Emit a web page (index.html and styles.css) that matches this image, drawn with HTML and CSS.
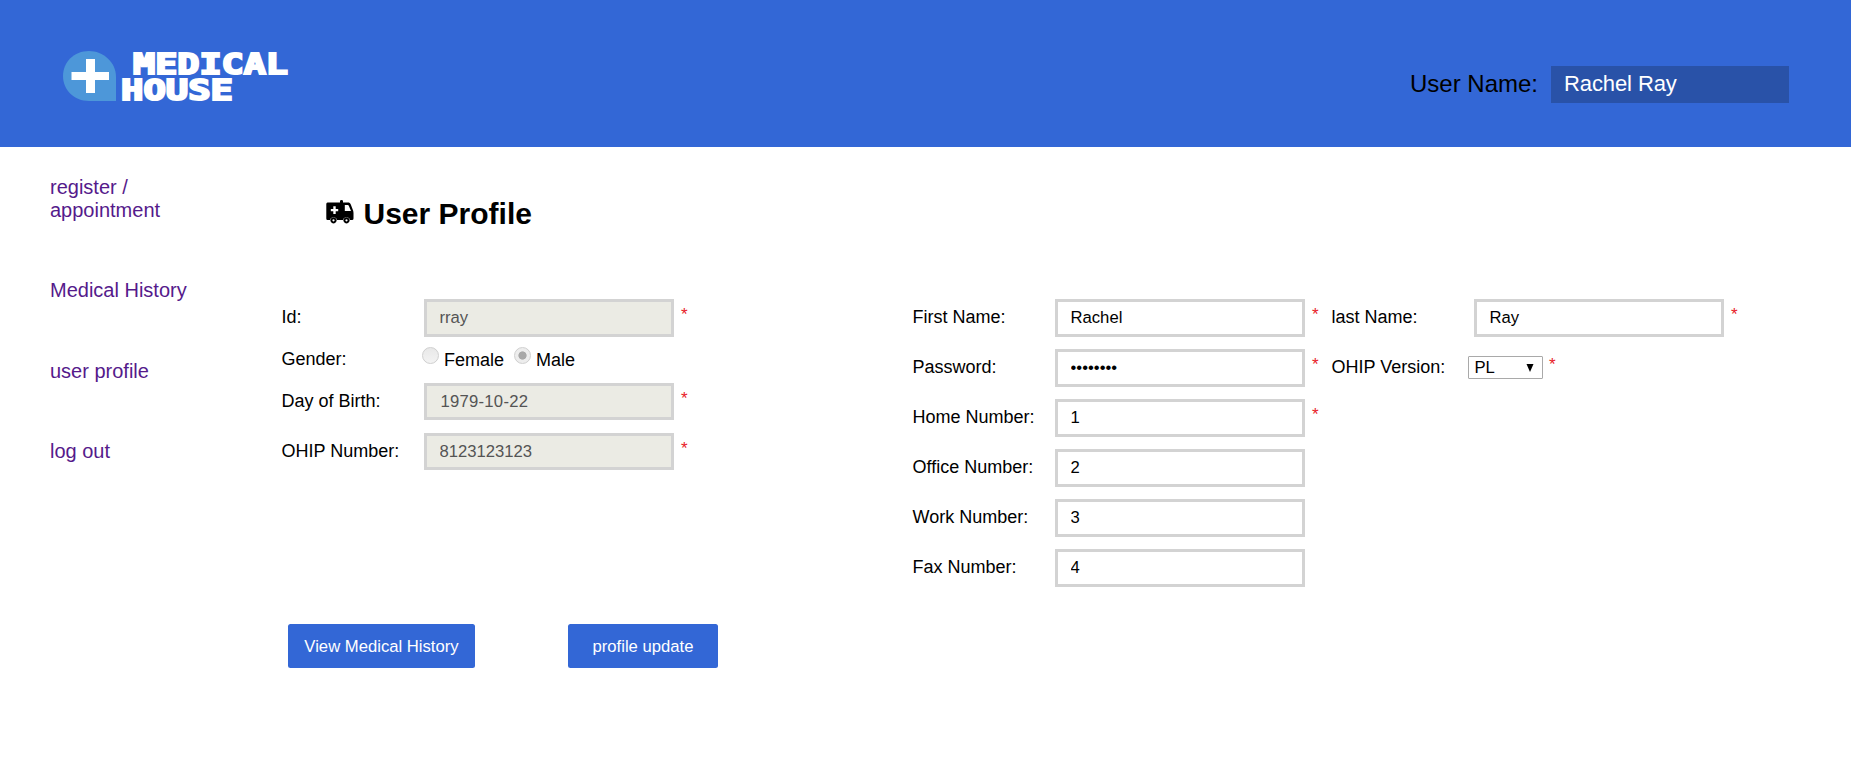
FILE: index.html
```html
<!DOCTYPE html>
<html lang="en">
<head>
<meta charset="utf-8">
<title>User Profile</title>
<link rel="stylesheet" href="styles.css">
</head>
<body>
<header class="header">
  <svg class="logo" width="236" height="70" viewBox="0 0 236 70" role="img" aria-label="Medical House">
    <path class="logo-drop" d="M27 3C41 3 54 14 54 29V53H27C12 53 1 42 1 28S12 3 27 3Z"/>
    <path class="logo-cross" d="M24 11H33V24H47V32H33V45H24V32H9.500V24H24Z"/>
    <text class="logo-text" x="71" y="26.200" textLength="155" lengthAdjust="spacingAndGlyphs">MEDICAL</text>
    <text class="logo-text" x="59" y="51.500" textLength="112" lengthAdjust="spacingAndGlyphs">HOUSE</text>
  </svg>
  <div class="account">
    <span class="account-label">User Name:</span>
    <span class="account-name">Rachel Ray</span>
  </div>
</header>
<div class="page">
  <nav class="nav">
    <a href="#">register / appointment</a>
    <a href="#">Medical History</a>
    <a href="#">user profile</a>
    <a href="#">log out</a>
  </nav>
  <main class="content">
    <h1 class="title">
      <svg class="van" width="28" height="24" viewBox="0 0 28 24" aria-hidden="true">
        <path fill-rule="evenodd" d="M1.500 2.500H14V1.200Q14 0 15.500 0Q17 0 17 1.200V2.500H22C23.500 2.500 24 3 24.800 4.500L26.500 9Q27.500 11 27.500 13V18.500Q27.500 20 26 20H24A3.600 3.600 0 0 0 17 20H11A3.600 3.600 0 0 0 4 20H1.500Q.3 20 .3 18.500V4Q.3 2.500 1.500 2.500ZM7.300 6.200V9H4.800V11.200H7.300V14H9.700V11.200H12.200V9H9.700V6.200ZM18.800 5V11H25L22.800 5.700Q22.500 5 21.800 5Z"/>
        <path fill-rule="evenodd" d="M7.500 17.200a3.100 3.100 0 1 0 .01 0ZM7.500 19.200a1.100 1.100 0 1 1-.01 0ZM20.500 17.200a3.100 3.100 0 1 0 .01 0ZM20.500 19.200a1.100 1.100 0 1 1-.01 0Z"/>
      </svg>
      <span>User Profile</span>
    </h1>
    <form class="form">
      <div class="column column-wide">
        <div class="field"><label>Id:</label><input class="box" value="rray" disabled><span class="star">*</span></div>
        <div class="field gender"><label>Gender:</label>
          <div class="choices">
            <input class="radio" type="radio" name="gender" disabled><span>Female</span>
            <input class="radio radio-next" type="radio" name="gender" checked disabled><span>Male</span>
          </div>
        </div>
        <div class="field short"><label>Day of Birth:</label><input class="box date" value="1979-10-22" disabled><span class="star">*</span></div>
        <div class="field short"><label>OHIP Number:</label><input class="box" value="8123123123" disabled><span class="star">*</span></div>
      </div>
      <div class="column">
        <div class="field"><label>First Name:</label><input class="box" value="Rachel"><span class="star">*</span></div>
        <div class="field"><label>Password:</label><input class="box" value="••••••••"><span class="star">*</span></div>
        <div class="field"><label>Home Number:</label><input class="box" value="1"><span class="star">*</span></div>
        <div class="field"><label>Office Number:</label><input class="box" value="2"></div>
        <div class="field"><label>Work Number:</label><input class="box" value="3"></div>
        <div class="field"><label>Fax Number:</label><input class="box" value="4"></div>
      </div>
      <div class="column">
        <div class="field"><label>last Name:</label><input class="box" value="Ray"><span class="star">*</span></div>
        <div class="field version"><label>OHIP Version:</label>
          <div class="select"><span>PL</span><svg width="8" height="8" viewBox="0 0 8 8"><path d="M0.500 0H7.500L4 8Z"/></svg></div>
          <span class="star">*</span></div>
      </div>
    </form>
    <div class="actions">
      <button class="btn btn-history">View Medical History</button>
      <button class="btn btn-update">profile update</button>
    </div>
  </main>
</div>
</body>
</html>
```
FILE: styles.css
```css
* { box-sizing: border-box; }
body {
  margin: 0;
  background: #fff;
  color: #000;
  font-family: "Liberation Sans", Arial, sans-serif;
  font-size: 18px;
}
.header {
  height: 147px;
  background: #3367d6;
  display: flex;
  justify-content: space-between;
  align-items: flex-start;
  padding: 48px 62px 0;
}
.logo { display: block; overflow: visible; }
.logo-drop { fill: #4d97d9; }
.logo-cross { fill: #fff; }
.logo-text {
  fill: #fff;
  stroke: #fff;
  stroke-width: 2px;
  font: bold 27.500px "DejaVu Sans Mono", monospace;
}
.account { display: flex; align-items: flex-start; height: 37px; margin-top: 18px; }
.account-label { font-size: 24px; line-height: 35px; margin-right: 13px; }
.account-name {
  width: 238px;
  height: 37px;
  padding-left: 13px;
  background: #2952a8;
  color: #fff;
  font-size: 22px;
  letter-spacing: -.1px;
  line-height: 36px;
}
.page { display: flex; }
.nav {
  width: 281px;
  padding: 29px 80px 0 50px;
  display: flex;
  flex-direction: column;
  gap: 58px;
  font-size: 20px;
  line-height: 23px;
}
.nav a { color: #551a8b; text-decoration: none; }
.nav a:first-child { margin-bottom: -1px; }
.nav a:last-child { margin-top: -1px; }
.content { flex: 1; }
.title {
  display: flex;
  align-items: flex-start;
  margin: 49px 0 0 45px;
  height: 34px;
  font-size: 30px;
  line-height: 36px;
}
.van { margin: 4px 9.500px 0 0; }
.form { display: flex; margin-top: 69px; height: 288px; }
.column { width: 419px; display: flex; flex-direction: column; gap: 12px; }
.column-wide { width: 631px; }
.field { display: flex; height: 38px; }
.field label { width: 143px; padding-left: .5px; line-height: 37px; white-space: nowrap; }
.field.short .box { height: 37px; }
.field.gender { height: 22px; }
.gender label { line-height: 20px; }
.box {
  width: 250px;
  height: 38px;
  margin: 0;
  padding: 0 12.500px;
  border: 3px solid #d3d3d3;
  border-radius: 0;
  background: #fff;
  color: #000;
  font: 16.67px "Liberation Sans", Arial, sans-serif;
}
.box:disabled { background: #ebebe4; color: #545454; }
.date { padding-left: 13.500px; letter-spacing: .25px; }
.star { margin-left: 7px; color: #e8202a; font-size: 17px; line-height: 31px; }
.choices { display: flex; align-items: flex-start; margin-left: -2px; line-height: 22px; }
.radio {
  appearance: none;
  width: 17px;
  height: 17px;
  margin: -2px 5px 0 0;
  border: 1px solid #cfcfcf;
  border-radius: 50%;
  background: linear-gradient(#e8e8e8, #f3f3f3);
}
.radio:checked { background: radial-gradient(circle, #a8a8a8 0 3.700px, #ededed 4.500px); }
.radio-next { margin-left: 10px; }
.version label { width: 137px; }
.select {
  display: flex;
  align-items: center;
  justify-content: space-between;
  width: 75px;
  height: 23px;
  margin-top: 7px;
  padding: 0 8px 0 5.500px;
  border: 1px solid #a9a9a9;
  border-radius: 1px;
  font-size: 16.67px;
  line-height: 21px;
}
.version .star { margin-left: 6px; }
.actions { display: flex; gap: 93px; margin: 37px 0 0 7px; }
.btn {
  height: 44px;
  padding: 1px 0 0;
  border: 0;
  border-radius: 2.500px;
  background: #3367d6;
  color: #fff;
  font: 16.67px "Liberation Sans", Arial, sans-serif;
}
.btn-history { width: 187px; }
.btn-update { width: 150px; }
```
